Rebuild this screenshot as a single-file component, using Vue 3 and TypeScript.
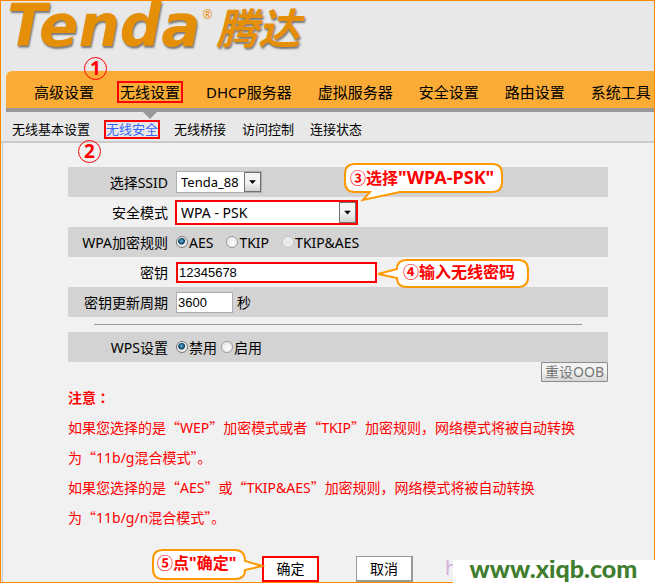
<script setup lang="ts">
import { ref } from 'vue'

interface MenuItem {
  label: string
  active?: boolean
}

interface Cipher {
  label: string
  disabled?: boolean
}

const mainMenu: MenuItem[] = [
  { label: '高级设置' },
  { label: '无线设置', active: true },
  { label: 'DHCP服务器' },
  { label: '虚拟服务器' },
  { label: '安全设置' },
  { label: '路由设置' },
  { label: '系统工具' },
]

const subMenu: MenuItem[] = [
  { label: '无线基本设置' },
  { label: '无线安全', active: true },
  { label: '无线桥接' },
  { label: '访问控制' },
  { label: '连接状态' },
]

const ciphers: Cipher[] = [{ label: 'AES' }, { label: 'TKIP' }, { label: 'TKIP&AES', disabled: true }]
const wpsStates: string[] = ['禁用', '启用']

const ssid = ref('Tenda_88')
const mode = ref('WPA - PSK')
const cipher = ref('AES')
const key = ref('12345678')
const period = ref('3600')
const wps = ref('禁用')
</script>

<template>
  <div class="page" lang="zh-CN">
    <header class="header">
      <div class="logo">
        <span class="logo-en">Tenda</span><span class="logo-reg">®</span><span class="logo-cn">腾达</span>
      </div>
      <span class="step step-one">1</span>
    </header>

    <nav class="main-nav">
      <a v-for="item in mainMenu" :key="item.label" href="#" :class="{ active: item.active }">{{ item.label }}</a>
    </nav>

    <nav class="sub-nav">
      <a v-for="item in subMenu" :key="item.label" href="#" :class="{ active: item.active }">{{ item.label }}</a>
      <span class="step step-two">2</span>
    </nav>

    <main class="panel">
      <form class="form" @submit.prevent>
        <div class="row shaded">
          <label class="name" for="ssid">选择SSID</label>
          <span class="select small">
            <select id="ssid" v-model="ssid"><option>Tenda_88</option></select>
            <svg class="arrow" viewBox="0 0 17 20"><path d="M5 8h7v1h-1v1h-1v1h-1v1h-1v-1h-1v-1h-1v-1h-1z" /></svg>
          </span>
        </div>
        <div class="row">
          <label class="name" for="mode">安全模式</label>
          <span class="select wide">
            <select id="mode" v-model="mode"><option>WPA - PSK</option></select>
            <svg class="arrow" viewBox="0 0 17 20"><path d="M5 8h7v1h-1v1h-1v1h-1v1h-1v-1h-1v-1h-1v-1h-1z" /></svg>
          </span>
          <div class="callout callout-mode">
            <svg width="160" height="40" viewBox="0 0 160 40">
              <path d="M11 2H148Q158 2 158 12V20Q158 30 148 30H56L19 38L26 30H11Q1 30 1 20V12Q1 2 11 2Z" />
            </svg>
            <span>③选择<b>"WPA-PSK"</b></span>
          </div>
        </div>
        <div class="row shaded" role="radiogroup" aria-label="WPA加密规则">
          <span class="name">WPA加密规则</span>
          <span class="radios">
            <label v-for="c in ciphers" :key="c.label"><input v-model="cipher" type="radio" name="cipher" :value="c.label" :disabled="c.disabled" />{{ c.label }}</label>
          </span>
        </div>
        <div class="row">
          <label class="name" for="key">密钥</label>
          <input id="key" v-model="key" class="text key" type="text" />
          <div class="callout callout-key">
            <svg width="154" height="32" viewBox="0 0 154 32">
              <path d="M31 2H142Q152 2 152 12V19Q152 29 142 29H31Q21 29 21 20L2 16L21 11Q21 2 31 2Z" />
            </svg>
            <span>④输入无线密码</span>
          </div>
        </div>
        <div class="row shaded">
          <label class="name" for="period">密钥更新周期</label>
          <input id="period" v-model="period" class="text period" type="text" />
          <span class="unit">秒</span>
        </div>
        <hr />
        <div class="row shaded" role="radiogroup" aria-label="WPS设置">
          <span class="name">WPS设置</span>
          <span class="radios tight">
            <label v-for="w in wpsStates" :key="w"><input v-model="wps" type="radio" name="wps" :value="w" />{{ w }}</label>
          </span>
        </div>
        <div class="reset"><button type="button">重设OOB</button></div>

        <section class="notes">
          <strong>注意<span class="colon" lang="zh-TW">：</span></strong>
          <p>如果您选择的是<q>WEP</q>加密模式或者<q>TKIP</q>加密规则，网络模式将被自动转换<br />为<q>11b/g混合模式</q>。</p>
          <p>如果您选择的是<q>AES</q>或<q>TKIP&amp;AES</q>加密规则，网络模式将被自动转换<br />为<q>11b/g/n混合模式</q>。</p>
        </section>

        <div class="actions">
          <div class="callout callout-ok">
            <svg width="114" height="34" viewBox="0 0 114 34">
              <path d="M12 2H84Q94 2 94 13L111 18L94 22Q94 31 84 31H12Q2 31 2 21V12Q2 2 12 2Z" />
            </svg>
            <span>⑤点"确定"</span>
          </div>
          <button class="ok" type="submit">确定</button>
          <button class="cancel" type="button">取消</button>
        </div>
      </form>
    </main>

    <div class="watermark"><span class="hint">h</span><span class="site">www.xiqb.com</span></div>
  </div>
</template>

<style>
body {
  background: #f1f1f1;
}
</style>

<style scoped>
.page {
  position: relative;
  box-sizing: border-box;
  min-height: 100vh;
  border: 1px solid #ff8a00;
  background: #e8e8e8;
  color: #000;
  font-family: "Noto Sans", "Noto Sans CJK SC", sans-serif;
  font-size: 14px;
}
button,
select {
  font-family: inherit;
}
.header {
  position: relative;
  height: 70px;
}
.logo {
  display: flex;
  align-items: flex-start;
  padding-left: 6px;
  color: #e58e08;
  font-weight: bold;
  font-style: italic;
  line-height: 50px;
  white-space: nowrap;
  text-shadow: 1px 2px 2px #777;
}
.logo-en {
  font-family: "DejaVu Sans", sans-serif;
  font-size: 58px;
}
.logo-reg {
  margin-left: 2px;
  font-size: 12px;
  font-weight: normal;
  font-style: normal;
  line-height: 28px;
  text-shadow: none;
}
.logo-cn {
  margin-left: 4px;
  font-family: "Noto Sans CJK SC", sans-serif;
  font-size: 42px;
}
.step {
  position: absolute;
  z-index: 2;
  box-sizing: border-box;
  width: 23px;
  height: 23px;
  border: 1px solid #f00;
  border-radius: 50%;
  color: #f00;
  font: bold 19px/21px "Noto Sans", sans-serif;
  text-align: center;
}
.step-one {
  left: 83px;
  top: 56px;
}
.step-two {
  left: 77px;
  top: 28px;
}
.main-nav {
  display: flex;
  gap: 26px;
  margin-left: 5px;
  padding: 13px 0 8px 28px;
  border-bottom: 4px solid #999;
  border-top-left-radius: 6px;
  background: #faac36;
  font-size: 15px;
  line-height: 16px;
  white-space: nowrap;
}
.main-nav a,
.sub-nav a {
  position: relative;
  color: #000;
  text-decoration: none;
}
.main-nav .active,
.sub-nav .active {
  outline: 2px solid #f00;
}
.main-nav .active {
  outline-offset: 1px;
}
.main-nav .active::after {
  content: "";
  position: absolute;
  left: 50%;
  top: 28px;
  margin-left: -7px;
  border: 7px solid transparent;
  border-top-color: #999;
  border-bottom: 0;
}
.sub-nav {
  position: relative;
  display: flex;
  gap: 16px;
  padding: 10px 0 4px 11px;
  border-bottom: 2px solid #ccc;
  font-size: 13px;
  line-height: 15px;
  white-space: nowrap;
}
.sub-nav a.active {
  color: #36f;
}
.panel {
  margin-left: 1px;
  padding: 24px 46px 0 65px;
  border-left: 1px solid #ccc;
  background: #f1f1f1;
}
.form {
  max-width: 540px;
}
.row {
  position: relative;
  display: flex;
  align-items: center;
  height: 30px;
}
.shaded {
  background: #d3d3d3;
}
.name {
  width: 100px;
  margin-right: 8px;
  text-align: right;
  white-space: nowrap;
}
.select {
  display: flex;
  box-sizing: border-box;
  border: 1px solid #abadb3;
  background: #fff;
}
.select select {
  flex: 1;
  min-width: 0;
  height: 20px;
  padding: 0 0 0 4px;
  border: 0;
  background: transparent;
  color: #000;
  appearance: none;
  font-size: 13px;
}
.select .arrow {
  box-sizing: border-box;
  width: 17px;
  height: 20px;
  border: 1px solid #707070;
  background: linear-gradient(#f4f4f4 50%, #d4d4d4);
  pointer-events: none;
}
.small {
  width: 86px;
}
.wide {
  width: 183px;
  margin-left: -1px;
  border: 2px solid #f00;
}
.wide select {
  height: 21px;
  font-size: 14px;
}
.wide .arrow {
  height: 21px;
}
.radios {
  display: flex;
  gap: 13px;
}
.tight {
  gap: 4px;
}
.radios label {
  display: flex;
  align-items: center;
  gap: 1px;
}
.radios input {
  box-sizing: border-box;
  width: 12px;
  height: 12px;
  margin: 0;
  border: 1px solid #999;
  border-radius: 50%;
  appearance: none;
  background: radial-gradient(circle at 60% 60%, #fff, #ddd);
  box-shadow: inset 0 0 0 1px #f4f4f4;
}
.radios input:checked {
  border-color: #777;
  background: radial-gradient(circle at 45% 40%, #7cc4e4 0, #1a6690 2px, #0d3550 3px, #e8e8e8 4px);
}
.radios input:disabled {
  border-color: #c4c4c4;
  background: #e8e8e8;
}
.text {
  box-sizing: border-box;
  height: 21px;
  padding: 0 1px;
  border: 1px solid #abadb3;
  background: #fff;
  color: #000;
  font-family: "Liberation Sans", sans-serif;
  font-size: 13px;
}
.key {
  width: 201px;
  border: 2px solid #f00;
}
.period {
  width: 57px;
}
.unit {
  margin-left: 4px;
}
hr {
  height: 0;
  margin: 7px 26px;
  border: 0;
  border-top: 1px solid #999;
}
.reset {
  display: flex;
  justify-content: flex-end;
}
.reset button {
  box-sizing: border-box;
  height: 20px;
  padding: 0 3px;
  border: 1px solid #8c8c8c;
  border-radius: 1px;
  background: linear-gradient(#f2f2f2 45%, #d6d6d6);
  color: #777;
  font-size: 14px;
  line-height: 18px;
}
.notes {
  padding-top: 1px;
  color: #f00;
  line-height: 30px;
  white-space: nowrap;
}
.notes strong {
  display: block;
}
.notes p {
  margin: 0;
}
.notes .colon {
  font-family: "Noto Sans CJK TC", sans-serif;
  line-height: 1;
}
.notes q::before,
.notes q::after {
  font-family: "Noto Sans CJK SC", sans-serif;
  line-height: 1;
}
.notes q::before {
  content: "“";
}
.notes q::after {
  content: "”";
}
.actions {
  position: relative;
  display: flex;
  gap: 37px;
  padding: 23px 0 0 194px;
}
.actions button {
  box-sizing: border-box;
  width: 57px;
  height: 26px;
  padding: 0;
  background: #fff;
  color: #000;
  font-size: 14px;
  line-height: 20px;
}
.actions .ok {
  border: 2px solid #f00;
}
.actions .cancel {
  border: 1px solid #999;
  border-width: 1px 2px 2px 1px;
}
.callout {
  position: absolute;
  z-index: 1;
  color: #f00;
  font-family: "Noto Sans", "Noto Sans CJK SC", sans-serif;
  font-size: 16px;
  font-weight: bold;
  line-height: 20px;
  white-space: nowrap;
}
.callout svg {
  display: block;
  fill: #fff;
  stroke: #f90;
  stroke-width: 2;
}
.callout span {
  position: absolute;
}
.callout b {
  font-size: 18px;
  font-weight: bold;
}
.callout-mode {
  left: 276px;
  top: -35px;
}
.callout-mode span {
  left: 6px;
  top: 5px;
}
.callout-key {
  left: 308px;
  top: 1px;
}
.callout-key span {
  left: 27px;
  top: 4px;
}
.callout-ok {
  left: 83px;
  top: 15px;
}
.callout-ok span {
  left: 6px;
  top: 5px;
}
.watermark {
  position: absolute;
  right: -1px;
  bottom: -1px;
  z-index: 2;
  display: flex;
  align-items: flex-start;
  height: 23px;
}
.hint {
  width: 8px;
  overflow: hidden;
  color: #d4aedd;
  font-size: 20px;
  line-height: 16px;
}
.site {
  box-sizing: border-box;
  width: 202px;
  height: 23px;
  padding-right: 1px;
  overflow: hidden;
  background: #fff;
  color: #3f7d2f;
  font: 900 25px/17px Lato, sans-serif;
  text-align: center;
}
</style>
